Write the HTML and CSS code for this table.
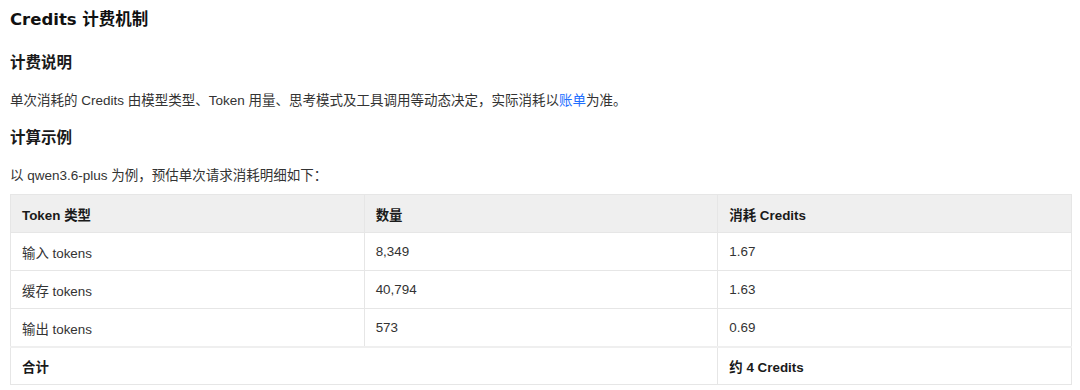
FILE: index.html
```html
<!DOCTYPE html>
<html lang="zh-CN">
<head>
<meta charset="utf-8">
<link rel="stylesheet" href="styles.css">
</head>
<body>
<main class="doc">
  <h2 class="title">Credits 计费机制</h2>
  <h3 class="sub">计费说明</h3>
  <p class="text">单次消耗的 Credits 由模型类型、Token 用量、思考模式及工具调用等动态决定，实际消耗以<a class="link" href="#">账单</a>为准。</p>
  <h3 class="sub sub-2">计算示例</h3>
  <p class="text">以 qwen3.6-plus 为例，预估单次请求消耗明细如下：</p>
  <table class="grid">
    <thead>
      <tr><th>Token 类型</th><th>数量</th><th>消耗 Credits</th></tr>
    </thead>
    <tbody>
      <tr><td>输入 tokens</td><td>8,349</td><td>1.67</td></tr>
      <tr><td>缓存 tokens</td><td>40,794</td><td>1.63</td></tr>
      <tr><td>输出 tokens</td><td>573</td><td>0.69</td></tr>
      <tr class="total"><td colspan="2">合计</td><td>约 4 Credits</td></tr>
    </tbody>
  </table>
</main>
</body>
</html>
```
FILE: styles.css
```css
html, body {
  margin: 0;
  padding: 0;
  background: #ffffff;
}
body {
  font-family: "Liberation Sans", "Noto Sans CJK SC", sans-serif;
  color: #333333;
  font-size: 13.5px;
}
.doc {
  padding: 8px 8px 0 10px;
}
.title {
  margin: 0;
  font-family: "DejaVu Sans", "Noto Sans CJK SC", sans-serif;
  font-size: 16.5px;
  font-weight: 700;
  line-height: 24px;
  color: #111111;
}
.sub {
  margin: 19px 0 0;
  font-size: 15.5px;
  font-weight: 700;
  line-height: 24px;
  color: #1a1a1a;
}
.sub-2 {
  margin-top: 13px;
}
.text {
  margin: 14px 0 0;
  line-height: 24px;
  color: #333333;
}
.link {
  color: #1f6fff;
  text-decoration: none;
}
.grid {
  margin-top: 6px;
  width: 100%;
  border-collapse: collapse;
  table-layout: fixed;
  font-size: 13.4px;
}
.grid th,
.grid td {
  border: 1px solid #e6e6e6;
  height: 37px;
  padding: 0 11px;
  text-align: left;
  vertical-align: middle;
  color: #333333;
}
.grid th {
  background: #efefef;
  font-weight: 700;
  color: #1a1a1a;
}
.grid .total td {
  border-top: 2px solid #efefef;
  height: 36px;
  font-weight: 700;
  color: #1a1a1a;
}
```
